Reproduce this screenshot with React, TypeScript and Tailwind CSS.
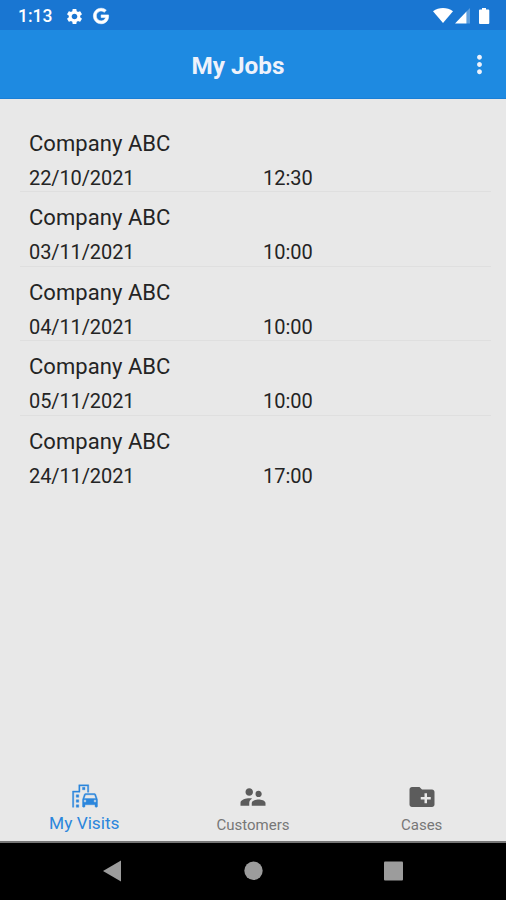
import clsx from 'clsx';
import type { IconType } from 'react-icons';
import { FaGoogle } from 'react-icons/fa';
import {
  MdCreateNewFolder,
  MdEmojiTransportation,
  MdMoreVert,
  MdSettings,
  MdSupervisorAccount,
} from 'react-icons/md';

const jobs = [
  { company: 'Company ABC', date: '22/10/2021', time: '12:30' },
  { company: 'Company ABC', date: '03/11/2021', time: '10:00' },
  { company: 'Company ABC', date: '04/11/2021', time: '10:00' },
  { company: 'Company ABC', date: '05/11/2021', time: '10:00' },
  { company: 'Company ABC', date: '24/11/2021', time: '17:00' },
];

const tabs: { label: string; icon: IconType; active?: boolean }[] = [
  { label: 'My Visits', icon: MdEmojiTransportation, active: true },
  { label: 'Customers', icon: MdSupervisorAccount },
  { label: 'Cases', icon: MdCreateNewFolder },
];

function StatusBar() {
  return (
    <div className="flex h-[30px] shrink-0 items-center bg-[#1976d2] pt-0.5 pr-4 pl-[18px] text-white">
      <span className="w-[46.5px] text-[17.5px] leading-5 font-medium">1:13</span>
      <MdSettings className="size-[19px]" />
      <FaGoogle className="ml-[9.5px] size-4 overflow-visible stroke-current stroke-[18]" />
      <svg className="ml-auto h-4 w-[57px]" viewBox="0 0 57 16" fill="currentColor">
        <path d="M0 3.2C6-1 14-1 20 3.2L10 15Z" />
        <path d="M22 15.5 33.5 3.5V15.5Z" />
        <path d="M33.5 3.5 37 0V15.5H33.5Z" opacity=".3" />
        <path d="M46 2.5Q46 1.5 47 1.5H49V0H53V1.5H55.3Q56.3 1.5 56.3 2.5V15Q56.3 16 55.3 16H47Q46 16 46 15Z" />
      </svg>
    </div>
  );
}

function Header() {
  return (
    <header className="relative flex h-[69px] shrink-0 items-center justify-center border-b border-[#1a7fd6] bg-[#1e8ae1] pt-1 pr-9">
      <h1 className="ml-1.5 text-[24.3px] leading-8 font-bold text-[#eef2fb]">My Jobs</h1>
      <MdMoreVert className="absolute top-5 right-3 size-[29px] text-[#eef2fb]" />
    </header>
  );
}

function JobList() {
  return (
    <ul className="flex-1 pt-[18.5px] pr-[15px] pl-5 text-[#242424]">
      {jobs.map((job, i) => (
        <li
          key={job.date}
          className={clsx(
            'flex h-[74.5px] flex-col pt-3 pl-[9px]',
            i < jobs.length - 1 && 'border-b border-[#dfdfdf]',
          )}
        >
          <p className="text-[22px] leading-[28px] tracking-[0.05px]">{job.company}</p>
          <div className="mt-2 flex text-[20px] leading-6">
            <span className="w-[234px] tracking-[-0.1px]">{job.date}</span>
            <span>{job.time}</span>
          </div>
        </li>
      ))}
    </ul>
  );
}

function TabBar() {
  return (
    <nav className="grid h-[60px] shrink-0 grid-cols-3">
      {tabs.map(({ label, icon: Icon, active }) => (
        <div
          key={label}
          className={clsx(
            'flex flex-col items-center',
            active ? 'text-[#2b86dc]' : 'pt-px text-[#5c5c5c]',
          )}
        >
          {/* the md icons carry an invisible bounding path that must stay unstroked */}
          <Icon
            className={clsx(
              'size-[30px]',
              active && 'ml-px stroke-current stroke-[0.3] [&>path[fill=none]]:stroke-none',
            )}
          />
          <span
            className={clsx(
              'leading-5',
              active ? 'mt-0.5 text-[17.3px]' : 'mt-[3px] text-[15px] text-[#777]',
            )}
          >
            {label}
          </span>
        </div>
      ))}
    </nav>
  );
}

function SystemNav() {
  return (
    <div className="h-[59px] shrink-0 border-t-2 border-[#777] bg-black text-[#9c9c9c]">
      <svg className="h-[57px] w-full" viewBox="0 0 506 57" fill="currentColor">
        <path d="M103 28 121 17.5V38.5Z" />
        <circle cx="253.5" cy="27.8" r="9.2" />
        <rect x="384" y="18.5" width="19" height="19" rx="1" />
      </svg>
    </div>
  );
}

export default function App() {
  return (
    <div className="flex h-screen w-full flex-col overflow-hidden bg-[#e8e8e8] font-['Roboto',sans-serif]">
      <StatusBar />
      <Header />
      <JobList />
      <TabBar />
      <SystemNav />
    </div>
  );
}
